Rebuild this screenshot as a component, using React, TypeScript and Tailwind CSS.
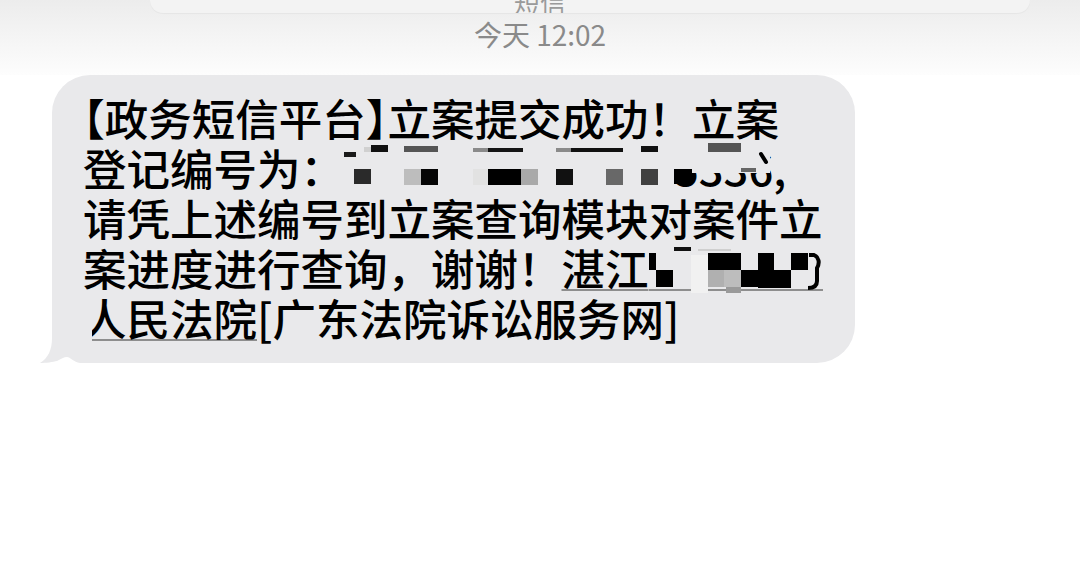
import React from 'react';

const BUBBLE = '#e9e9eb';

// mosaic blocks over the case number (line 2), coords relative to the block start
const NUMBER_MOSAIC: [number, number, number, number, string][] = [
  [0, 9, 12, 5, '#1a1a1a'],
  [20, 4, 7, 5, '#d0d0d0'],
  [27, 2, 17, 7, '#111111'],
  [60, 3, 34, 6, '#555555'],
  [129, 5, 15, 4, '#8a8a8a'],
  [144, 5, 35, 4, '#151515'],
  [212, 5, 15, 4, '#8a8a8a'],
  [227, 5, 52, 4, '#111111'],
  [297, 3, 17, 6, '#111111'],
  [10, 26, 17, 15, '#2a2a2a'],
  [60, 26, 17, 16, '#bdbdbd'],
  [77, 26, 17, 16, '#050505'],
  [129, 26, 15, 16, '#e2e2e2'],
  [144, 26, 33, 16, '#000000'],
  [177, 26, 17, 16, '#a9a9a9'],
  [212, 26, 17, 16, '#111111'],
  [262, 26, 17, 16, '#686868'],
  [297, 26, 17, 16, '#404040'],
];

// mosaic over the court name (line 4); first entry continues the link underline
const COURT_MOSAIC: [number, number, number, number, string][] = [
  [0, 46, 174, 2, '#8e8e8e'],
  [42, 12, 17, 38, '#f1f1f1'],
  [0, 10, 7, 17, '#000000'],
  [7, 27, 17, 17, '#000000'],
  [25, 4, 17, 4, '#111111'],
  [49, 6, 33, 2, '#cfcfcf'],
  [59, 10, 33, 17, '#000000'],
  [59, 27, 16, 17, '#b0b0b0'],
  [75, 27, 17, 17, '#bdbdbd'],
  [77, 44, 15, 6, '#9a9a9a'],
  [92, 27, 17, 17, '#000000'],
  [109, 10, 16, 35, '#000000'],
  [125, 27, 17, 18, '#000000'],
  [142, 10, 17, 17, '#000000'],
];

function Mosaic({ width, blocks, children }: { width: number; blocks: [number, number, number, number, string][]; children?: React.ReactNode }) {
  return (
    <svg width={width} height={50} viewBox={`0 0 ${width} 50`} className="inline-block align-top">
      {blocks.map(([x, y, w, h, c], i) => (
        <rect key={i} x={x} y={y} width={w} height={h} fill={c} />
      ))}
      {children}
    </svg>
  );
}

const halt = "[font-feature-settings:'halt']";
const link = 'underline decoration-[#8e8e8e] decoration-2 underline-offset-[3px] [text-decoration-skip-ink:none]';

export default function App() {
  return (
    <div className="w-[1080px] h-[584px] overflow-hidden bg-white font-['Noto_Sans_CJK_SC','Noto_Sans',sans-serif]">
      {/* header */}
      <div className="h-[75px] flex flex-col bg-linear-to-b from-[#ececec] to-[#fdfdfd]">
        <div className="ml-[150px] w-[880px] h-[13px] rounded-b-[14px] bg-[#f3f3f3] shadow-[0_1px_1px_rgba(0,0,0,0.04)] overflow-hidden">
          <div className="w-[780px] -mt-[12px] text-center text-[26px] leading-[28px] text-[#9a9a9a]">短信</div>
        </div>
        <div className="mt-[5px] text-center text-[28px] leading-[32px] text-[#8a8a8a]">今天 12:02</div>
      </div>

      {/* message bubble */}
      <div className="relative ml-[52px] w-[803px] rounded-[38px] bg-[#e9e9eb] pt-[18px] pb-[20px] pl-[31px] text-[43.5px] leading-[50px] font-medium text-black whitespace-nowrap">
        <div>
          <span className={halt}>【</span>政务短信平台<span className={halt}>】</span>立案提交成功！立案
        </div>
        <div>
          登记编号为：
          <Mosaic width={330} blocks={NUMBER_MOSAIC} />
          <span className="relative inline-block">
            5336,
            <svg width={110} height={50} viewBox="0 0 110 50" className="absolute left-0 top-0">
              <rect x={0} y={0} width={96} height={30} fill={BUBBLE} />
              <rect x={34} y={0} width={33} height={9} fill="#555555" />
              <rect x={0} y={26} width={18} height={15} fill="#000000" />
              <rect x={67} y={25} width={15} height={4} fill="#666666" />
              <path d="M87 11 L92 19" stroke="#000" strokeWidth={4} strokeLinecap="round" />
            </svg>
          </span>
        </div>
        <div>请凭上述编号到立案查询模块对案件立</div>
        <div>
          案进度进行查询，谢谢！<span className={link}>湛江</span>
          <Mosaic width={174} blocks={COURT_MOSAIC}>
            <path d="M160 12 H165 C170 14 171 20 168 25 L168 38 C168 43 165 45 159 45" stroke="#000" strokeWidth={4} fill="none" />
          </Mosaic>
        </div>
        <div className="flex">
          <span className={link}>人民法院</span>
          <span>[广东法院诉讼服务网]</span>
        </div>

        {/* tail */}
        <svg width={56} height={43} viewBox="0 0 56 43" className="absolute -left-[16px] bottom-0">
          <path
            d="M16 0 L16 18 C16 30 12 38 4 43 C10 43 17 42 21 41 C25 39 28 37 31 37 C34 37 38 42 44 43 L56 43 L56 0 Z"
            fill={BUBBLE}
          />
        </svg>
      </div>
    </div>
  );
}
